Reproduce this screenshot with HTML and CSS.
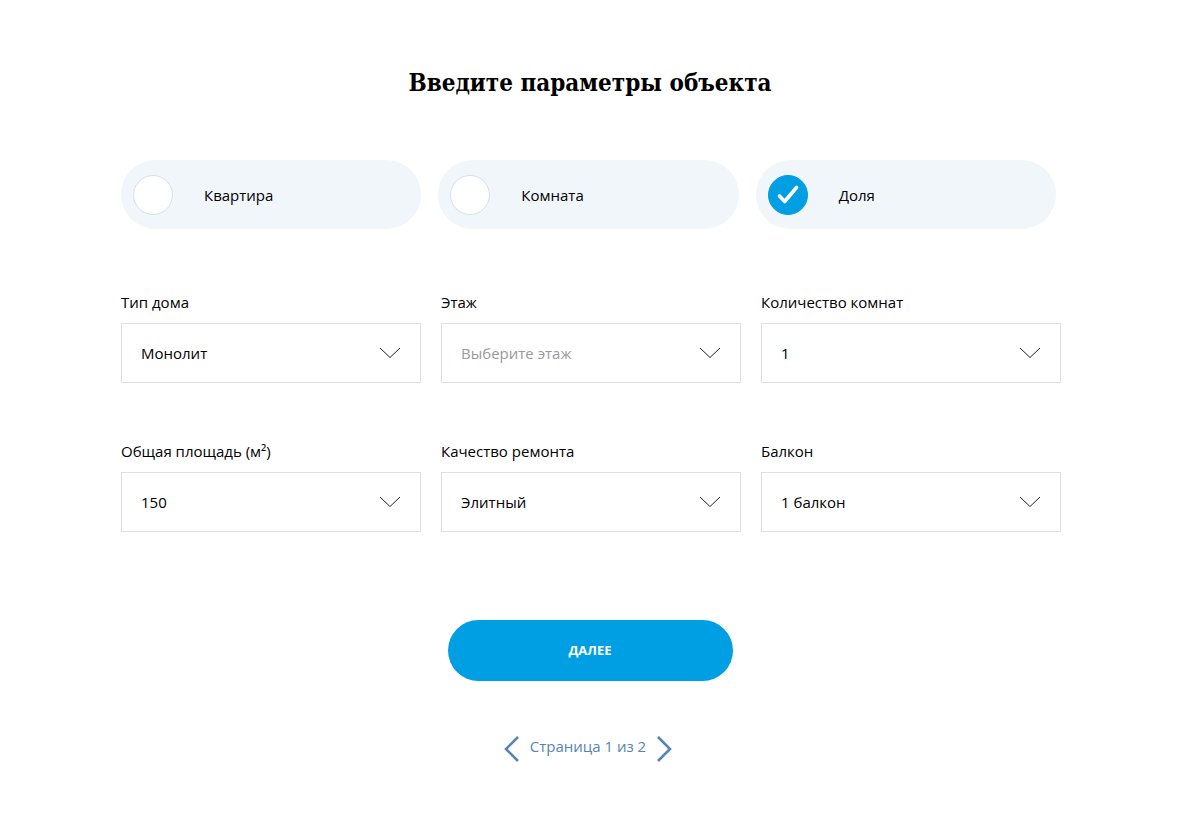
FILE: index.html
```html
<!DOCTYPE html>
<html lang="ru">
<head>
    <meta charset="UTF-8">
    <meta name="viewport" content="width=device-width, initial-scale=1">
    <title>Введите параметры объекта</title>
    <link rel="stylesheet" href="styles.css">
</head>
<body>

<main class="page">
    <h1 class="title">Введите параметры объекта</h1>

    <form id="formObject">
        <div class="types" role="radiogroup" aria-label="Тип объекта">
            <label class="type">
                <input type="radio" name="type" value="flat">
                <span>Квартира</span>
            </label>
            <label class="type">
                <input type="radio" name="type" value="room">
                <span>Комната</span>
            </label>
            <label class="type">
                <input type="radio" name="type" value="share" checked>
                <span>Доля</span>
            </label>
        </div>

        <div class="fields">
            <div class="field">
                <label for="house">Тип дома</label>
                <div class="select">
                    <select name="house" id="house">
                        <option>Монолит</option>
                    </select>
                    <svg class="arrow" viewBox="0 0 22 12"><path d="M1 1l10 9.5L21 1"/></svg>
                </div>
            </div>
            <div class="field">
                <label for="floor">Этаж</label>
                <div class="select">
                    <select name="floor" id="floor" class="empty">
                        <option value="">Выберите этаж</option>
                    </select>
                    <svg class="arrow" viewBox="0 0 22 12"><path d="M1 1l10 9.5L21 1"/></svg>
                </div>
            </div>
            <div class="field">
                <label for="rooms">Количество комнат</label>
                <div class="select">
                    <select name="rooms" id="rooms">
                        <option>1</option>
                    </select>
                    <svg class="arrow" viewBox="0 0 22 12"><path d="M1 1l10 9.5L21 1"/></svg>
                </div>
            </div>
            <div class="field">
                <label for="area">Общая площадь (м²)</label>
                <div class="select">
                    <select name="area" id="area">
                        <option>150</option>
                    </select>
                    <svg class="arrow" viewBox="0 0 22 12"><path d="M1 1l10 9.5L21 1"/></svg>
                </div>
            </div>
            <div class="field">
                <label for="quality">Качество ремонта</label>
                <div class="select">
                    <select name="quality" id="quality">
                        <option>Элитный</option>
                    </select>
                    <svg class="arrow" viewBox="0 0 22 12"><path d="M1 1l10 9.5L21 1"/></svg>
                </div>
            </div>
            <div class="field">
                <label for="balcony">Балкон</label>
                <div class="select">
                    <select name="balcony" id="balcony">
                        <option>1 балкон</option>
                    </select>
                    <svg class="arrow" viewBox="0 0 22 12"><path d="M1 1l10 9.5L21 1"/></svg>
                </div>
            </div>
        </div>

        <button type="submit" class="next">ДАЛЕЕ</button>
    </form>

    <nav class="pager" aria-label="Страницы">
        <a href="#prev" aria-label="Назад"><svg viewBox="0 0 16 26"><path d="M14 1L2 13l12 12"/></svg></a>
        <span>Страница 1 из 2</span>
        <a href="#next" aria-label="Вперёд"><svg viewBox="0 0 16 26"><path d="M2 1l12 12L2 25"/></svg></a>
    </nav>
</main>

</body>
</html>
```

FILE: styles.css
```css
body {
    margin: 0;
    background-color: #fff;
    color: #000;
    font-family: "Open Sans", "Noto Sans", sans-serif;
    font-size: 15px;
    line-height: 20px;
}
.page {
    max-width: 942px;
    margin: 0 auto;
    padding: 65px 20px 40px;
}
.title {
    margin: 0 0 59px;
    font-family: "Roboto Slab", "DejaVu Serif Condensed", "DejaVu Serif", serif;
    font-size: 24px;
    line-height: 36px;
    font-weight: bold;
    text-align: center;
}

/* Тип объекта */
.types {
    display: grid;
    grid-template-columns: repeat(3, 1fr);
    gap: 17px;
    padding: 0 5px 0 2px;
}
.type {
    display: flex;
    align-items: center;
    gap: 31px;
    height: 69px;
    padding-left: 12px;
    border-radius: 35px;
    background-color: #f0f6fa;
    cursor: pointer;
}
.type input {
    appearance: none;
    flex: none;
    width: 40px;
    height: 40px;
    margin: 0;
    border: 1px solid #d3e2ea;
    border-radius: 50%;
    background-color: #fff;
    cursor: pointer;
}
.type input:checked {
    border-color: #009fe3;
    background: #009fe3 url("data:image/svg+xml,%3Csvg xmlns='http://www.w3.org/2000/svg' viewBox='0 0 40 40'%3E%3Cpath d='M11.5 21l5.2 5.5L28.5 12.5' fill='none' stroke='white' stroke-width='3.6' stroke-linecap='round' stroke-linejoin='round'/%3E%3C/svg%3E") center / 40px 40px no-repeat;
}

/* Поля */
.fields {
    display: grid;
    grid-template-columns: repeat(3, 1fr);
    gap: 58px 20px;
    padding: 63px 0 0 2px;
}
.field label {
    display: block;
    margin-bottom: 11px;
}
.select {
    position: relative;
}
.select select {
    appearance: none;
    display: block;
    width: 100%;
    height: 60px;
    padding: 0 50px 0 19px;
    border: 1px solid #dfdfdf;
    border-radius: 0;
    background-color: #fff;
    color: #000;
    font: inherit;
    cursor: pointer;
}
.select .empty { color: #999; }
.arrow {
    position: absolute;
    top: 24px;
    right: 20px;
    width: 22px;
    height: 12px;
    fill: none;
    stroke: #222;
    pointer-events: none;
}

.next {
    display: block;
    width: 285px;
    height: 61px;
    margin: 88px auto 0;
    padding: 0 0 2px;
    border: none;
    border-radius: 31px;
    background-color: #009fe3;
    color: #fff;
    font-family: inherit;
    font-size: 13px;
    font-weight: bold;
    cursor: pointer;
}
.next:hover { background-color: #008fcc; }

/* Страницы */
.pager {
    display: flex;
    justify-content: center;
    gap: 10px;
    margin-top: 55px;
    padding-right: 4px;
    color: #5585b5;
}
.pager svg {
    display: block;
    width: 16px;
    height: 26px;
    fill: none;
    stroke: #5585b5;
    stroke-width: 2.6;
}
```
